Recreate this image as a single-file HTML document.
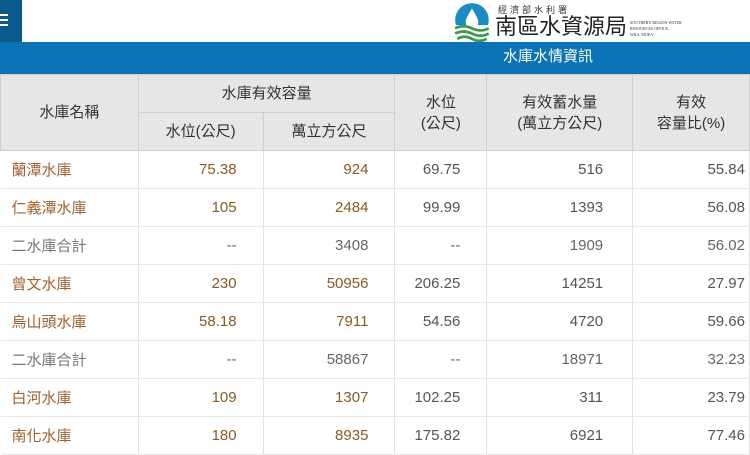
<!DOCTYPE html>
<html><head><meta charset="utf-8">
<style>
*{margin:0;padding:0;box-sizing:border-box}
body{width:750px;height:451px;overflow:hidden;background:#fff;font-family:"Liberation Sans","Noto Sans CJK TC",sans-serif;position:relative}
.top{position:absolute;left:0;top:0;width:750px;height:42px;background:#fff}
.ham{position:absolute;left:0;top:0;width:22px;height:42px;background:#0c5a8c}
.ham i{position:absolute;left:0;width:8px;height:2px;background:#fff}
.band{position:absolute;left:0;top:42px;width:750px;height:32px;background:#0a73b5;color:#fff;font-size:15px}
.band span{position:absolute;left:503px;top:3px}
table{position:absolute;left:0;top:74px;width:750px;border-collapse:collapse;font-size:15px}
th{background:#e6e6e6;color:#333;font-weight:normal;border:1px solid #cfcfcf;text-align:center;line-height:21px}
td{height:38px;border-right:1px solid #e2e2e2;border-bottom:1px solid #e8e8e8;text-align:right;padding-right:26px;color:#555}
td:first-child{text-align:left;padding-left:11px;color:#a2602c}
td:nth-child(5){padding-right:29px}
td:last-child{padding-right:4px}
td.b{color:#8a5a22}
tr.s td{color:#666}
tr.s td:first-child{color:#777}
</style></head><body>
<div class="top">
<div class="ham"><i style="top:14px"></i><i style="top:19px"></i><i style="top:24px"></i></div>
<svg style="position:absolute;left:452px;top:2px" width="42" height="40" viewBox="0 0 40 38">
<circle cx="19" cy="17" r="16" fill="#1a8bc4"/>
<path d="M19 6 C15 13 13 16 13 19 a6 6 0 0 0 12 0 C25 16 23 13 19 6Z" fill="#fff"/>
<rect x="0" y="22" width="40" height="16" fill="#fff"/>
<path d="M3 25 q8 -4 16 0 t16 0 M3 30 q8 -4 16 0 t16 0 M5 35 q7 -4 14 0 t14 0" stroke="#3a9a4a" stroke-width="2.6" fill="none"/>
</svg>
<div style="position:absolute;left:498px;top:3px;font-size:9px;color:#333;letter-spacing:3px">經濟部水利署</div>
<div style="position:absolute;left:495px;top:14px;font-size:22px;color:#222;line-height:26px">南區水資源局</div>
<div style="position:absolute;left:630px;top:20px;font-size:4px;color:#333;line-height:6px;font-family:'Liberation Serif',serif">SOUTHERN REGION WATER<br>RESOURCES OFFICE,<br>WRA, MOEA</div>
</div>
<div class="band"><span>水庫水情資訊</span></div>
<table>
<colgroup><col style="width:138px"><col style="width:125px"><col style="width:132px"><col style="width:92px"><col style="width:146px"><col style="width:117px"></colgroup>
<tr style="height:38px"><th rowspan="2">水庫名稱</th><th colspan="2">水庫有效容量</th><th rowspan="2">水位<br>(公尺)</th><th rowspan="2">有效蓄水量<br>(萬立方公尺)</th><th rowspan="2">有效<br>容量比(%)</th></tr>
<tr style="height:38px"><th>水位(公尺)</th><th>萬立方公尺</th></tr>
<tr><td>蘭潭水庫</td><td class="b">75.38</td><td class="b">924</td><td>69.75</td><td>516</td><td>55.84</td></tr>
<tr><td>仁義潭水庫</td><td class="b">105</td><td class="b">2484</td><td>99.99</td><td>1393</td><td>56.08</td></tr>
<tr class="s"><td>二水庫合計</td><td>--</td><td>3408</td><td>--</td><td>1909</td><td>56.02</td></tr>
<tr><td>曾文水庫</td><td class="b">230</td><td class="b">50956</td><td>206.25</td><td>14251</td><td>27.97</td></tr>
<tr><td>烏山頭水庫</td><td class="b">58.18</td><td class="b">7911</td><td>54.56</td><td>4720</td><td>59.66</td></tr>
<tr class="s"><td>二水庫合計</td><td>--</td><td>58867</td><td>--</td><td>18971</td><td>32.23</td></tr>
<tr><td>白河水庫</td><td class="b">109</td><td class="b">1307</td><td>102.25</td><td>311</td><td>23.79</td></tr>
<tr><td>南化水庫</td><td class="b">180</td><td class="b">8935</td><td>175.82</td><td>6921</td><td>77.46</td></tr>
</table>
</body></html>
